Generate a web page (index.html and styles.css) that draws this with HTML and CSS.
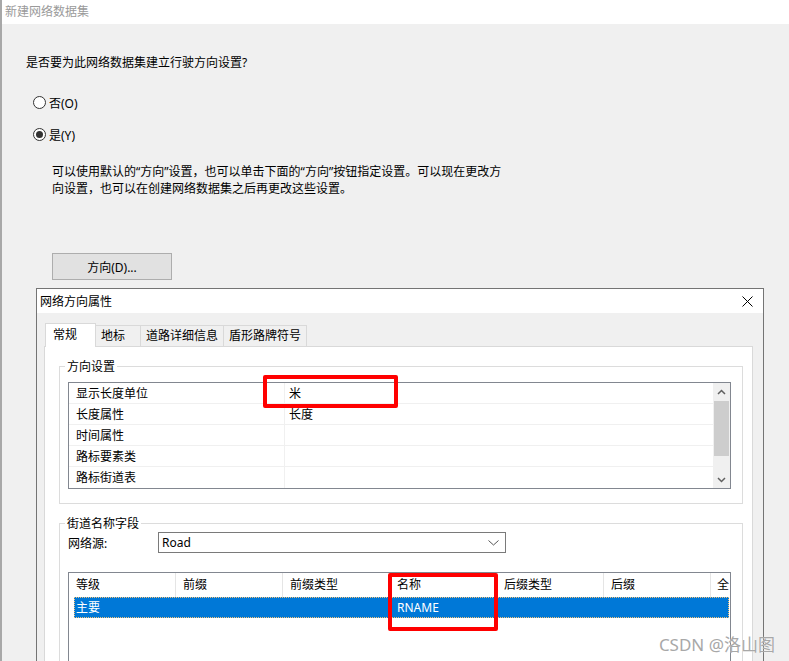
FILE: index.html
```html
<!DOCTYPE html>
<html lang="zh-CN">
<head>
  <meta charset="UTF-8" />
  <title>新建网络数据集</title>
  <link rel="stylesheet" href="styles.css">
</head>
<body>

  <div class="wizard">
    <div class="wizard-title">新建网络数据集</div>
    <div class="wizard-body">
      <p class="question">是否要为此网络数据集建立行驶方向设置?</p>
      <label class="radio first"><span class="radio-dot"></span>否(O)</label>
      <label class="radio"><span class="radio-dot checked"></span>是(Y)</label>
      <p class="hint">可以使用默认的“方向”设置，也可以单击下面的“方向”按钮指定设置。可以现在更改方向设置，也可以在创建网络数据集之后再更改这些设置。</p>
      <button class="btn">方向(D)...</button>
    </div>

    <div class="dialog">
      <div class="dialog-title">
        <span>网络方向属性</span>
        <svg class="close" width="11" height="11" viewBox="0 0 11 11">
          <path d="M0.5 0.5 L10.5 10.5 M10.5 0.5 L0.5 10.5" stroke="#000" stroke-width="1" fill="none"/>
        </svg>
      </div>
      <div class="dialog-body">
        <div class="tabs">
          <div class="tab active" style="width:51px">常规</div>
          <div class="tab" style="width:46px">地标</div>
          <div class="tab" style="width:84px">道路详细信息</div>
          <div class="tab" style="width:84px">盾形路牌符号</div>
        </div>
        <div class="tab-panel">
          <fieldset class="group">
            <legend>方向设置</legend>
            <div class="prop-grid">
              <div class="prop-rows">
                <div class="prop-row"><span>显示长度单位</span><span>米</span></div>
                <div class="prop-row"><span>长度属性</span><span>长度</span></div>
                <div class="prop-row"><span>时间属性</span><span></span></div>
                <div class="prop-row"><span>路标要素类</span><span></span></div>
                <div class="prop-row"><span>路标街道表</span><span></span></div>
              </div>
              <div class="scrollbar">
                <div class="arrow">
                  <svg width="9" height="6" viewBox="0 0 9 6"><path d="M1 5 L4.5 1.5 L8 5" stroke="#606060" stroke-width="1.5" fill="none"/></svg>
                </div>
                <div class="thumb"></div>
                <div class="track"></div>
                <div class="arrow">
                  <svg width="9" height="6" viewBox="0 0 9 6"><path d="M1 1 L4.5 4.5 L8 1" stroke="#606060" stroke-width="1.5" fill="none"/></svg>
                </div>
              </div>
            </div>
          </fieldset>

          <fieldset class="group streets">
            <legend>街道名称字段</legend>
            <div class="source-row">
              <span class="source-label">网络源:</span>
              <div class="combo">
                <span>Road</span>
                <svg width="11" height="6" viewBox="0 0 11 6"><path d="M0.5 0.5 L5.5 5 L10.5 0.5" stroke="#555" stroke-width="1" fill="none"/></svg>
              </div>
            </div>
            <div class="list">
              <div class="list-head">
                <div>等级</div>
                <div>前缀</div>
                <div>前缀类型</div>
                <div>名称</div>
                <div>后缀类型</div>
                <div>后缀</div>
                <div>全</div>
              </div>
              <div class="list-row selected">
                <div>主要</div>
                <div></div>
                <div></div>
                <div>RNAME</div>
                <div></div>
                <div></div>
                <div></div>
              </div>
            </div>
          </fieldset>
        </div>
      </div>
    </div>
  </div>

  <div class="mark mark-unit"></div>
  <div class="mark mark-name"></div>
  <div class="watermark">CSDN @洛山图</div>

</body>
</html>
```

FILE: styles.css
```css
body {
  margin: 0;
  height: 661px;
  overflow: hidden;
  position: relative;
  background: #f0f0f0;
  font-family: "Segoe UI", "Noto Sans", "Noto Sans CJK SC", sans-serif;
  font-size: 12px;
  color: #000;
}

.wizard {
  border-left: 2px solid #a8a8a8;
  min-height: 661px;
}

.wizard-title {
  height: 24px;
  line-height: 24px;
  padding-left: 3px;
  background: #fff;
  color: #9a9a9a;
}

.wizard-body {
  padding-left: 24px;
}

.question {
  margin: 30px 0 0;
  line-height: 17px;
}

.radio {
  display: flex;
  align-items: center;
  gap: 3px;
  height: 17px;
  margin: 15px 0 0 7px;
}

.radio.first {
  margin-top: 23px;
}

.radio-dot {
  width: 11px;
  height: 11px;
  border: 1px solid #333;
  border-radius: 50%;
  background: #fff;
  display: flex;
  align-items: center;
  justify-content: center;
}

.radio-dot.checked::after {
  content: "";
  width: 7px;
  height: 7px;
  border-radius: 50%;
  background: #333;
}

.hint {
  margin: 20px 0 0 26px;
  width: 460px;
  line-height: 17px;
}

.btn {
  display: block;
  margin: 56px 0 0 26px;
  width: 120px;
  height: 27px;
  border: 1px solid #adadad;
  background: #e1e1e1;
  font: inherit;
  color: #000;
  padding: 0;
}

/* dialog */

.dialog {
  margin: 8px 0 0 34px;
  width: 728px;
  box-sizing: border-box;
  border: 1px solid #747474;
  height: 400px;
  background: #f0f0f0;
}

.dialog-title {
  height: 24px;
  background: #fff;
  display: flex;
  align-items: center;
  justify-content: space-between;
  padding: 0 10px 0 3px;
}

.dialog-body {
  padding: 10px 10px 0 7px;
}

.tabs {
  display: flex;
  align-items: flex-end;
  height: 23px;
  padding-left: 1px;
}

.tab {
  box-sizing: border-box;
  height: 21px;
  line-height: 20px;
  padding-left: 5px;
  border: 1px solid #d9d9d9;
  border-bottom: none;
  margin-left: -1px;
  background: #f0f0f0;
}

.tab:first-child {
  margin-left: 0;
}

.tab.active {
  position: relative;
  z-index: 1;
  height: 24px;
  margin-bottom: -1px;
  line-height: 22px;
  padding-left: 7px;
  background: #fff;
}

.tab-panel {
  background: #fff;
  border: 1px solid #d9d9d9;
  height: 320px;
  padding: 11px 9px 0 14px;
}

.group {
  margin: 0;
  padding: 7px 11px 14px 8px;
  border: 1px solid #dcdcdc;
  min-width: 0;
}

.group + .group {
  margin-top: 11px;
}

.group.streets {
  padding-top: 0;
}

.group legend {
  padding: 0 2px;
  margin-left: -3px;
  line-height: 17px;
}

.prop-grid {
  display: flex;
  border: 1px solid #828790;
}

.prop-rows {
  flex: 1;
}

.prop-row {
  display: grid;
  grid-template-columns: 216px 1fr;
  height: 21px;
  box-sizing: border-box;
  border-bottom: 1px solid #f0f0f0;
  line-height: 21px;
}

.prop-row:last-child {
  border-bottom: none;
}

.prop-row span:first-child {
  padding-left: 7px;
  border-right: 1px solid #f0f0f0;
}

.prop-row span:last-child {
  padding-left: 4px;
}

.scrollbar {
  width: 17px;
  background: #f0f0f0;
  display: flex;
  flex-direction: column;
}

.arrow {
  height: 17px;
  display: flex;
  align-items: center;
  justify-content: center;
}

.thumb {
  height: 55px;
  margin: 1px 1px 0;
  background: #cdcdcd;
}

.track {
  flex: 1;
}

.source-row {
  display: flex;
  align-items: center;
  height: 21px;
}

.source-label {
  width: 90px;
}

.combo {
  width: 348px;
  height: 21px;
  box-sizing: border-box;
  border: 1px solid #7a7a7a;
  background: #fff;
  display: flex;
  align-items: center;
  justify-content: space-between;
  padding: 0 6px 0 3px;
}

.list {
  margin-top: 19px;
  border: 1px solid #828790;
  border-bottom: none;
  height: 100px;
  overflow: hidden;
}

.list-head {
  display: grid;
  grid-template-columns: repeat(6, 107px) 1fr;
  height: 24px;
  line-height: 23px;
  white-space: nowrap;
}

.list-head div {
  padding-left: 7px;
  border-right: 1px solid #e5e5e5;
}

.list-head div:last-child {
  padding-left: 6px;
  border-right: none;
}

.list-row {
  display: grid;
  grid-template-columns: 102px repeat(6, 107px);
  height: 21px;
  line-height: 21px;
  margin: 0 1px 0 5px;
  white-space: nowrap;
  overflow: hidden;
}

.list-row div {
  padding-left: 7px;
}

.list-row div:first-child {
  padding-left: 2px;
}

.list-row.selected {
  background: #0078d7;
  color: #fff;
  outline: 1px dotted #f2c27a;
  outline-offset: -1px;
}

/* annotations */

.mark {
  position: absolute;
  border: 4px solid #f00;
  border-radius: 2px;
  box-sizing: border-box;
}

.mark-unit {
  left: 263px;
  top: 375px;
  width: 135px;
  height: 33px;
}

.mark-name {
  left: 388px;
  top: 573px;
  width: 110px;
  height: 58px;
}

.watermark {
  position: absolute;
  right: 14px;
  bottom: 5px;
  font-family: "Noto Sans", "Noto Sans CJK SC", sans-serif;
  font-size: 17px;
  color: #a8a8a8;
  text-shadow: 0 0 1px #fff;
}
```
